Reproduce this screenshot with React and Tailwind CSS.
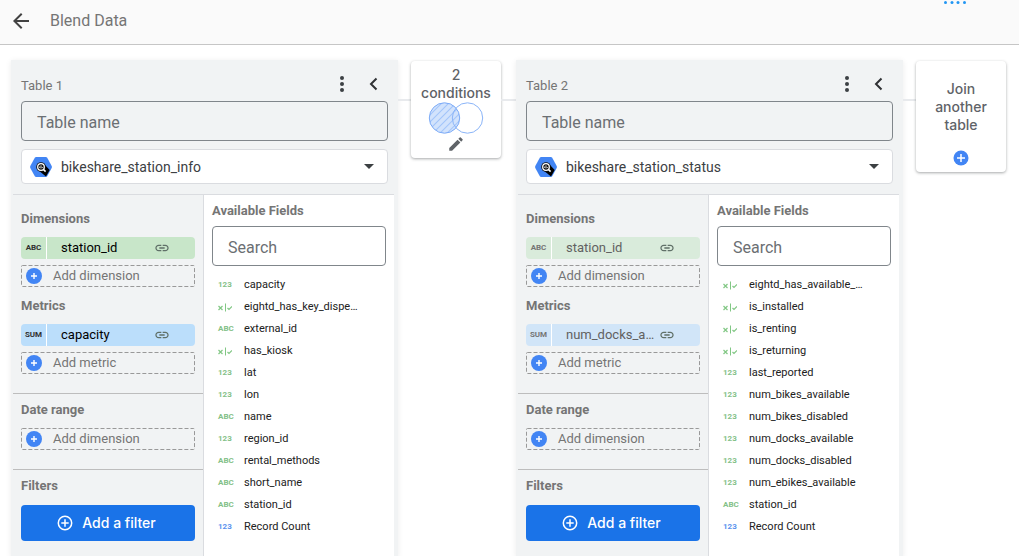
import React from 'react';

const TABLES = [
  {
    id: 1,
    source: 'bikeshare_station_info',
    dimension: 'station_id',
    metric: 'capacity',
    muted: false,
    fields: [
      ['123', 'capacity'],
      ['bool', 'eightd_has_key_dispe…'],
      ['ABC', 'external_id'],
      ['bool', 'has_kiosk'],
      ['123', 'lat'],
      ['123', 'lon'],
      ['ABC', 'name'],
      ['123', 'region_id'],
      ['ABC', 'rental_methods'],
      ['ABC', 'short_name'],
      ['ABC', 'station_id'],
      ['123', 'Record Count', true],
    ],
  },
  {
    id: 2,
    source: 'bikeshare_station_status',
    dimension: 'station_id',
    metric: 'num_docks_a…',
    muted: true,
    fields: [
      ['bool', 'eightd_has_available_…'],
      ['bool', 'is_installed'],
      ['bool', 'is_renting'],
      ['bool', 'is_returning'],
      ['123', 'last_reported'],
      ['123', 'num_bikes_available'],
      ['123', 'num_bikes_disabled'],
      ['123', 'num_docks_available'],
      ['123', 'num_docks_disabled'],
      ['123', 'num_ebikes_available'],
      ['ABC', 'station_id'],
      ['123', 'Record Count', true],
    ],
  },
];

const LINK_PATH =
  'M3.9 12c0-1.71 1.39-3.1 3.1-3.1h4V7H7c-2.76 0-5 2.24-5 5s2.24 5 5 5h4v-1.9H7c-1.71 0-3.1-1.39-3.1-3.1zM8 13h8v-2H8v2zm9-6h-4v1.9h4c1.71 0 3.1 1.39 3.1 3.1s-1.39 3.1-3.1 3.1h-4V17h4c2.76 0 5-2.24 5-5s-2.24-5-5-5z';

function PlusDisc() {
  return (
    <svg viewBox="0 0 16 16" className="size-4 shrink-0" aria-hidden="true">
      <circle cx="8" cy="8" r="8" fill="#4285f4" />
      <path d="M8 5v6M5 8h6" stroke="#fff" strokeWidth="1.4" />
    </svg>
  );
}

function SourceIcon() {
  return (
    <svg viewBox="0 0 22 20" className="h-5 w-[22px] shrink-0" aria-hidden="true">
      <path d="M6.2 0h9.6c.6 0 1.1.3 1.4.8l4.5 8.2c.3.6.3 1.3 0 1.9l-4.5 8.3c-.3.5-.8.8-1.4.8H6.2c-.6 0-1.1-.3-1.4-.8L.3 11c-.3-.6-.3-1.3 0-1.9L4.8.8C5.1.3 5.600 0 6.200 0z" fill="#4285f4" />
      <path d="M14.500 7.500l5.200 5.500-3.700 6.600-8-6.600z" fill="#000" />
      <circle cx="11" cy="10" r="4.800" fill="#111" />
      <circle cx="11" cy="10" r="3.300" fill="#111" stroke="#fff" strokeWidth="1.300" />
      <path d="M9.700 9.500v1.500M11 8.300v3.200M12.300 10v1" stroke="#fff" strokeWidth=".8" />
      <path d="M13.600 12.600l2 2" stroke="#fff" strokeWidth="1.500" />
    </svg>
  );
}

function FieldType({ type, blue }) {
  if (type === 'bool') {
    return (
      <svg viewBox="0 0 14 9" className="h-[9px] w-3.5" fill="none" stroke="#81c784" aria-hidden="true">
        <path d="M.5 3l4 4M4.500 3l-4 4" strokeWidth="1.200" />
        <path d="M7.500 .5v8" />
        <path d="M9.500 5l1.500 1.500 3-3" strokeWidth="1.200" />
      </svg>
    );
  }
  return (
    <span className={`text-[8px] leading-3 font-bold ${blue ? 'text-[#5b93ee]' : 'text-[#84c187]'}`}>
      {type}
    </span>
  );
}

function Chip({ tag, label, muted, kind }) {
  const green = kind === 'dimension';
  const tone = green
    ? muted ? 'bg-[#d9ebdb]' : 'bg-[#c8e6c9]'
    : muted ? 'bg-[#d1e5f8]' : 'bg-[#bbdefb]';
  return (
    <button
      type="button"
      className={`flex h-[22px] w-full items-center overflow-hidden rounded-sm text-left ${tone} ${muted ? 'text-[#616161]' : 'text-black'}`}
    >
      <span
        className={`flex h-full w-[26px] shrink-0 items-center justify-center border-r border-white text-[8px] font-bold ${muted ? 'text-[#757575]' : 'text-[#303030]'}`}
      >
        {tag}
      </span>
      <span className="ml-3.5 w-[90px] shrink-0 text-[13px] leading-5">{label}</span>
      <svg viewBox="0 0 24 24" className="ml-[3px] size-4 shrink-0 fill-[#607068]" aria-hidden="true">
        <path d={LINK_PATH} />
      </svg>
    </button>
  );
}

function AddRow({ label }) {
  return (
    <button
      type="button"
      className="relative flex h-[22px] w-full items-center gap-[11px] pl-[5px] text-[13px] leading-5 text-[#757575]"
    >
      <svg className="absolute inset-0 size-full" aria-hidden="true">
        <rect x="0.5" y="0.5" rx="1" className="h-[calc(100%-1px)] w-[calc(100%-1px)]" fill="none" stroke="#999" strokeDasharray="4 2" />
      </svg>
      <PlusDisc />
      {label}
    </button>
  );
}

function Heading({ children }) {
  return <h3 className="text-[13px] leading-5 font-bold text-[#757575]">{children}</h3>;
}

function TablePanel({ table }) {
  return (
    <section className="flex min-w-[387px] flex-1 flex-col bg-[#f1f3f4] shadow-[0_1px_6px_rgba(0,0,0,0.08)]">
      <div className="px-2.5 pt-3.5">
        <div className="flex h-5 items-center">
          <label htmlFor={`name-${table.id}`} className="mt-1 flex-1 text-[13px] leading-5 text-[#757575]">
            Table {table.id}
          </label>
          <button type="button" aria-label="More options" className="flex w-8 justify-center">
            <svg viewBox="0 0 24 24" className="size-6 fill-[#3c4043]">
              <circle cx="12" cy="6" r="2" />
              <circle cx="12" cy="12" r="2" />
              <circle cx="12" cy="18" r="2" />
            </svg>
          </button>
          <button type="button" aria-label="Collapse" className="flex w-[30px] justify-center">
            <svg viewBox="0 0 20 20" className="size-5" fill="none" stroke="#303134" strokeWidth="2">
              <path d="M13.500 4.500L8 10l5.500 5.500" />
            </svg>
          </button>
        </div>
        <input
          id={`name-${table.id}`}
          type="text"
          placeholder="Table name"
          className="mt-[7px] h-10 w-full rounded border border-[#80868b] bg-transparent px-[15px] pt-0.5 text-base text-[#3c4043] placeholder:text-[#6b6f73]"
        />
        <div className="mt-2 grid h-[35px] items-center">
          <select
            aria-label="Data source"
            className="col-start-1 row-start-1 h-full w-full appearance-none rounded border border-[#dadce0] bg-white pr-8 pl-[39px] text-sm text-[#3c4043]"
          >
            <option>{table.source}</option>
          </select>
          <div className="pointer-events-none col-start-1 row-start-1 flex items-center justify-between pr-3.5 pl-[9px]">
            <SourceIcon />
            <svg viewBox="0 0 10 5" className="h-[5px] w-2.5 fill-[#3c4043]" aria-hidden="true">
              <path d="M0 0h10L5 5z" />
            </svg>
          </div>
        </div>
      </div>
      <div className="mt-2.5 mr-1 ml-0.5 flex flex-1 border-t border-[#dadce0]">
        <div className="w-[191px] shrink-0 border-r border-[#dadce0]">
          <div className="px-2 pt-3.5 pb-[19px]">
            <Heading>Dimensions</Heading>
            <div className="my-2 flex flex-col gap-1.5">
              <Chip kind="dimension" tag="ABC" label={table.dimension} muted={table.muted} />
              <AddRow label="Add dimension" />
            </div>
            <div className="pt-px">
              <Heading>Metrics</Heading>
            </div>
            <div className="mt-2 flex flex-col gap-1.5">
              <Chip kind="metric" tag="SUM" label={table.metric} muted={table.muted} />
              <AddRow label="Add metric" />
            </div>
          </div>
          <div className="border-t border-[#bdbdbd] px-2 pt-1.5 pb-[19px]">
            <Heading>Date range</Heading>
            <div className="mt-2">
              <AddRow label="Add dimension" />
            </div>
          </div>
          <div className="border-t border-[#bdbdbd] px-2 pt-1.5 pb-4">
            <Heading>Filters</Heading>
            <button
              type="button"
              className="mt-[9px] flex h-9 w-full items-center justify-center gap-2 rounded bg-[#1a73e8] pr-1 font-['Inter',sans-serif] text-sm font-medium text-white"
            >
              <svg viewBox="0 0 18 18" className="size-[18px]" fill="none" stroke="#fff" strokeWidth="1.500" aria-hidden="true">
                <circle cx="9" cy="9" r="6.700" />
                <path d="M9 5.300v7.400M5.300 9h7.400" />
              </svg>
              Add a filter
            </button>
          </div>
        </div>
        <div className="min-w-0 flex-1 bg-white px-2 pt-1.5">
          <Heading>Available Fields</Heading>
          <input
            type="search"
            aria-label="Search available fields"
            placeholder="Search"
            className="mt-[5px] h-10 w-full rounded border border-[#80868b] bg-white px-[15px] pt-0.5 text-base placeholder:text-[#6b6f73]"
          />
          <ul className="mt-2">
            {table.fields.map(([type, name, blue]) => (
              <li key={name} className="flex h-[22px] items-center pl-1.5">
                <span className="flex w-[26px] shrink-0 items-center">
                  <FieldType type={type} blue={blue} />
                </span>
                <span className="text-[11px] leading-4 whitespace-nowrap text-[#212121]">{name}</span>
              </li>
            ))}
          </ul>
        </div>
      </div>
    </section>
  );
}

function Connector({ wide }) {
  return <div className={`mt-[39px] h-0.5 shrink-0 bg-[#e8eaed] ${wide ? 'w-[15px]' : 'w-[13px]'}`} />;
}

const CARD =
  "flex w-[90px] shrink-0 flex-col items-center self-start rounded bg-white text-center font-['Inter',sans-serif] text-sm leading-[18px] font-medium text-[#5f6368] shadow-[0_1px_3px_rgba(60,64,67,0.45)]";

export default function App() {
  return (
    <div className="flex min-h-screen flex-col bg-white font-['Roboto',sans-serif]">
      <header className="relative flex h-[45px] items-center gap-[17px] border-b border-[#c6c6c6] bg-[#fafafa] pr-4 pl-[9px]">
        <button type="button" aria-label="Back" className="mt-[-3px]">
          <svg viewBox="0 0 24 24" className="size-6 fill-[#424242]">
            <path d="M20 11H7.830l5.590-5.590L12 4l-8 8 8 8 1.410-1.410L7.830 13H20v-2z" />
          </svg>
        </button>
        <h1 className="mt-[-3px] text-base text-[#757575]">Blend Data</h1>
        <svg viewBox="0 0 24 4" className="absolute top-px right-[52px] h-1 w-6 fill-[#2196f3]" aria-hidden="true">
          <circle cx="2.500" cy="1.500" r="1.500" />
          <circle cx="9" cy="1.500" r="1.500" />
          <circle cx="15" cy="1.500" r="1.500" />
          <circle cx="21.500" cy="1.500" r="1.500" />
        </svg>
      </header>
      <main className="flex flex-1 pt-[15px] pr-[13px] pl-[11px]">
        <TablePanel table={TABLES[0]} />
        <Connector />
        <button type="button" className={`${CARD} mt-px h-[97px] pt-[5px]`}>
          <span>2</span>
          <span>conditions</span>
          <svg viewBox="0 0 56 32" className="h-8 w-14" aria-hidden="true">
            <defs>
              <pattern id="hatch" width="5" height="5" patternUnits="userSpaceOnUse" patternTransform="rotate(45)">
                <rect width="5" height="5" fill="#d2e3fc" />
                <path d="M.5 0v5" stroke="#a3c5fa" />
              </pattern>
            </defs>
            <circle cx="16.500" cy="16" r="15.200" fill="url(#hatch)" stroke="#7baaf7" />
            <circle cx="39.500" cy="16" r="15.200" fill="none" stroke="#8ab4f8" />
          </svg>
          <svg viewBox="0 0 24 24" className="mt-px size-[18px] fill-[#5f6368]" aria-hidden="true">
            <path d="M3 17.250V21h3.750L17.810 9.940l-3.750-3.750L3 17.250zM20.710 7.040a1 1 0 0 0 0-1.410l-2.340-2.340a1 1 0 0 0-1.410 0l-1.830 1.830 3.750 3.750 1.830-1.830z" />
          </svg>
        </button>
        <Connector wide />
        <TablePanel table={TABLES[1]} />
        <Connector />
        <button type="button" className={`${CARD} mt-px h-[111px] px-3 pt-[19px]`}>
          <span>Join another table</span>
          <svg viewBox="0 0 16 16" className="mt-4 size-4" aria-hidden="true">
            <circle cx="8" cy="8" r="7.500" fill="#4285f4" />
            <path d="M8 4v8M4 8h8" stroke="#fff" strokeWidth="1.500" />
          </svg>
        </button>
      </main>
    </div>
  );
}
